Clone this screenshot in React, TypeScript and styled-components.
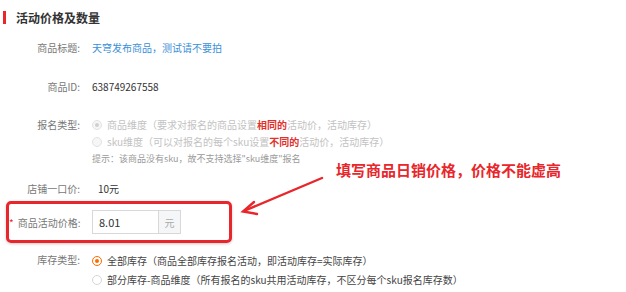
import styled, { createGlobalStyle } from "styled-components";

const GlobalStyle = createGlobalStyle`
  body {
    margin: 0;
    background: #fff;
    font-family: "Noto Sans CJK SC", "Noto Sans", sans-serif;
  }
`;

function App() {
  return (
    <Page>
      <GlobalStyle />
      <Header>
        <HeaderBar />
        <HeaderTitle>活动价格及数量</HeaderTitle>
      </Header>

      <FormRow top={14}>
        <Label>商品标题:</Label>
        <Content>
          <LinkText>天穹发布商品，测试请不要拍</LinkText>
        </Content>
      </FormRow>

      <FormRow top={22}>
        <Label>商品ID:</Label>
        <Content>
          <Value>638749267558</Value>
        </Content>
      </FormRow>

      <FormRow top={21}>
        <Label>报名类型:</Label>
        <Content>
          <RadioLine>
            <Radio disabled checked />
            <OptionText disabled>
              商品维度（要求对报名的商品设置<Strong>相同的</Strong>活动价，活动库存）
            </OptionText>
          </RadioLine>
          <RadioLine>
            <Radio disabled />
            <OptionText disabled>
              sku维度（可以对报名的每个sku设置<Strong>不同的</Strong>活动价，活动库存）
            </OptionText>
          </RadioLine>
          <Hint>提示：该商品没有sku，故不支持选择"sku维度"报名</Hint>
        </Content>
      </FormRow>

      <FormRow top={13}>
        <Label>店铺一口价:</Label>
        <Content indent={6}>
          <Value>10元</Value>
        </Content>
      </FormRow>

      <Highlight>
        <Label width={71}>
          <Required>*</Required>商品活动价格:
        </Label>
        <Content>
          <InputGroup>
            <PriceInput defaultValue="8.01" />
            <Addon>元</Addon>
          </InputGroup>
        </Content>
      </Highlight>

      <FormRow top={8}>
        <Label>库存类型:</Label>
        <Content>
          <RadioLine tall>
            <Radio checked />
            <OptionText>全部库存（商品全部库存报名活动，即活动库存=实际库存）</OptionText>
          </RadioLine>
          <RadioLine tall>
            <Radio />
            <OptionText>部分库存-商品维度（所有报名的sku共用活动库存，不区分每个sku报名库存数）</OptionText>
          </RadioLine>
        </Content>
      </FormRow>

      <Arrow width="626" height="292" viewBox="0 0 626 292">
        <g stroke="#e8262b" strokeWidth="2.4" strokeLinecap="round" fill="none">
          <line x1="322" y1="178" x2="244" y2="211" />
          <polyline points="254,202 243,211.5 257,214" />
        </g>
      </Arrow>
      <Callout>填写商品日销价格，价格不能虚高</Callout>
    </Page>
  );
}

export default App;

const Page = styled.div`
  position: relative;
  width: 626px;
  height: 292px;
  overflow: hidden;
`;

const Header = styled.div`
  display: flex;
  align-items: center;
  gap: 10px;
  padding: 10px 0 0 3px;
  height: 15px;
`;

const HeaderBar = styled.span`
  width: 3px;
  height: 13px;
  background: #e8262b;
`;

const HeaderTitle = styled.span`
  font-size: 12px;
  line-height: 15px;
  font-weight: 700;
  color: #333;
`;

const FormRow = styled.div<{ top: number }>`
  display: flex;
  align-items: flex-start;
  margin-top: ${(p) => p.top}px;
  font-size: 10px;
  line-height: 17px;
`;

const Label = styled.div<{ width?: number }>`
  flex: none;
  width: ${(p) => p.width ?? 80}px;
  text-align: right;
  color: #777;
  font-size: 10px;
  line-height: 17px;
  white-space: nowrap;
`;

const Required = styled.span`
  color: #e8262b;
  margin-right: 4px;
`;

const Content = styled.div<{ indent?: number }>`
  display: flex;
  flex-direction: column;
  margin-left: ${(p) => 12 + (p.indent ?? 0)}px;
`;

const LinkText = styled.span`
  color: #3b8fd8;
`;

const Value = styled.span`
  color: #333;
`;

const RadioLine = styled.div<{ tall?: boolean }>`
  display: flex;
  align-items: center;
  gap: 5px;
  height: ${(p) => (p.tall ? 19 : 17)}px;
  white-space: nowrap;
`;

const Radio = styled.span<{ checked?: boolean; disabled?: boolean }>`
  position: relative;
  flex: none;
  width: 10px;
  height: 10px;
  border-radius: 50%;
  box-sizing: border-box;
  border: 1px solid
    ${(p) => (p.disabled ? "#e2e2e2" : p.checked ? "#ff6a00" : "#d6d6d6")};
  background: ${(p) => (p.disabled ? "#f6f6f6" : "#fff")};
  &::after {
    content: "";
    display: ${(p) => (p.checked ? "block" : "none")};
    position: absolute;
    left: 2px;
    top: 2px;
    width: 4px;
    height: 4px;
    border-radius: 50%;
    background: ${(p) => (p.disabled ? "#cfcfcf" : "#ff6a00")};
  }
`;

const OptionText = styled.span<{ disabled?: boolean }>`
  color: ${(p) => (p.disabled ? "#c2c2c2" : "#444")};
`;

const Strong = styled.span`
  color: #e0312d;
  font-weight: 700;
`;

const Hint = styled.div`
  font-size: 9px;
  line-height: 17px;
  color: #9a9a9a;
`;

const Highlight = styled.div`
  display: flex;
  align-items: center;
  box-sizing: border-box;
  width: 226px;
  height: 42px;
  margin: 4px 0 0 6px;
  border: 3px solid #e8262b;
  border-radius: 5px;
  box-shadow: 0 1px 3px rgba(0, 0, 0, 0.2);
`;

const InputGroup = styled.div`
  display: flex;
  height: 24px;
`;

const PriceInput = styled.input`
  box-sizing: border-box;
  width: 66px;
  height: 24px;
  padding: 0 6px;
  border: 1px solid #d8d8d8;
  border-right: none;
  font-family: inherit;
  font-size: 11px;
  color: #333;
  outline: none;
`;

const Addon = styled.span`
  box-sizing: border-box;
  width: 23px;
  height: 24px;
  display: flex;
  align-items: center;
  justify-content: center;
  border: 1px solid #d8d8d8;
  background: #f5f6f7;
  color: #aaa;
  font-size: 10px;
`;

const Arrow = styled.svg`
  position: absolute;
  left: 0;
  top: 0;
  pointer-events: none;
`;

const Callout = styled.div`
  position: absolute;
  left: 336px;
  top: 160px;
  font-size: 15px;
  line-height: 20px;
  font-weight: 700;
  color: #e8262b;
  white-space: nowrap;
`;
